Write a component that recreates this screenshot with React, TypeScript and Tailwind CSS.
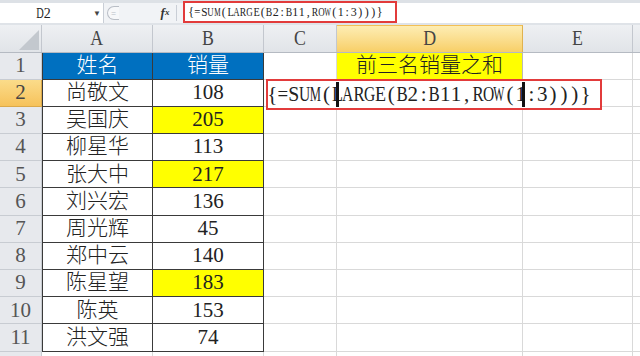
import React from 'react';

// column widths: row header, A, B, C, D, E (F takes the rest)
const COLS = [42, 111, 111, 73, 186, 110];
const LETTERS = ['A', 'B', 'C', 'D', 'E'];

type Row = { name: string; sales: string; hot?: boolean };

const ROWS: Row[] = [
  { name: '尚敬文', sales: '108' },
  { name: '吴国庆', sales: '205', hot: true },
  { name: '柳星华', sales: '113' },
  { name: '张大中', sales: '217', hot: true },
  { name: '刘兴宏', sales: '136' },
  { name: '周光辉', sales: '45' },
  { name: '郑中云', sales: '140' },
  { name: '陈星望', sales: '183', hot: true },
  { name: '陈英', sales: '153' },
  { name: '洪文强', sales: '74' },
];

const FORMULA = '{=SUM(LARGE(B2:B11,ROW(1:3)))}';

// squeeze wide Times glyphs into a half-em box (SimSun look)
const SQUEEZE: Record<string, string> = {
  M: 'scale-x-[0.6]',
  W: 'scale-x-[0.56]',
  U: 'scale-x-[0.74]',
  A: 'scale-x-[0.74]',
  G: 'scale-x-[0.74]',
  O: 'scale-x-[0.74]',
  D: 'scale-x-[0.74]',
  R: 'scale-x-[0.8]',
  B: 'scale-x-[0.8]',
  L: 'scale-x-[0.86]',
  E: 'scale-x-[0.86]',
  S: 'scale-x-[0.94]',
  '=': 'scale-x-[0.9]',
};

function MonoSerif({ text, cell }: { text: string; cell: string }) {
  return (
    <span className="inline-flex whitespace-pre">
      {text.split('').map((ch, i) => (
        <span key={i} className={'inline-flex justify-center ' + cell}>
          <span className={'inline-block ' + (SQUEEZE[ch] ?? '')}>{ch}</span>
        </span>
      ))}
    </span>
  );
}

function FormulaBar() {
  return (
    <div className="flex h-[23px] items-stretch bg-[#f1f3f6] border-t-[3px] border-[#dde1e6]">
      <div className="flex w-[104px] items-center bg-white border-r border-[#c9ced6]">
        <span className="flex-1 pr-[6px] text-center font-['Liberation_Serif',serif] text-[14px] text-[#222]">
          <MonoSerif text="D2" cell="w-[7.5px]" />
        </span>
        <span className="mr-[2px] text-[8px] text-[#444]">▼</span>
      </div>
      <div className="flex w-[50px] items-center pl-[3px]">
        <div className="flex h-[14px] w-[12px] items-center justify-center rounded-l-full border border-r-0 border-[#b9bec6] bg-[#f7f8fa] text-[9px] leading-none text-[#b9bec6]">=</div>
      </div>
      <div className="flex w-[22px] items-center justify-center font-['Liberation_Serif',serif] text-[13px] font-bold italic text-[#333]">
        f<span className="text-[9px]">x</span>
      </div>
      <div className="w-px bg-[#c9ced6] my-[2px]" />
      <div className="w-[6px]" />
      <div className="flex w-[214px] items-center border-2 border-[#e23b3b] bg-white pl-[3px] -mt-[2px] font-['Liberation_Serif',serif] text-[12px] text-[#222]">
        <MonoSerif text={FORMULA} cell="w-[6.5px]" />
      </div>
      <div className="flex-1 bg-white" />
    </div>
  );
}

function ColumnHeader() {
  return (
    <div className="flex h-[27.5px] bg-[#e4e7eb] border-b border-[#b5bac2]">
      <div className="relative w-[42px] shrink-0 border-r border-[#c3c7ce] bg-gradient-to-b from-[#eef0f3] to-[#e1e4e8]">
        <svg className="absolute right-[2px] bottom-[2px]" width="20" height="20" viewBox="0 0 20 20">
          <polygon points="20,0 20,20 0,20" fill="#c3c8ce" />
        </svg>
      </div>
      {LETTERS.map((l, i) => (
        <div
          key={l}
          style={{ width: COLS[i + 1] }}
          className={
            'flex shrink-0 items-center justify-center border-r font-["Liberation_Serif",serif] text-[21px] text-[#444] ' +
            (l === 'D'
              ? 'bg-gradient-to-b from-[#fdedb3] to-[#f8cf66] border-[#e0b24f] border-t border-t-[#f2bf55]'
              : 'bg-gradient-to-b from-[#eef0f3] to-[#e1e4e8] border-[#c3c7ce]')
          }
        >
          <span className="inline-block scale-x-[0.85]">{l}</span>
        </div>
      ))}
      <div className="flex-1 bg-gradient-to-b from-[#eef0f3] to-[#e1e4e8]" />
    </div>
  );
}

function RowHeader({ n, active }: { n?: number; active?: boolean }) {
  return (
    <div
      className={
        'flex w-[42px] shrink-0 items-center justify-center border-r border-b font-["Liberation_Serif",serif] text-[21px] ' +
        (active
          ? 'bg-gradient-to-b from-[#fbdc8a] to-[#f6c25a] border-[#dba94a] text-[#444]'
          : 'bg-[#e7e9ed] border-[#c8ccd2] text-[#555]')
      }
    >
      {n}
    </div>
  );
}

const cjk = "font-['Liberation_Serif','Noto_Sans_CJK_SC',serif] font-light";

export default function App() {
  return (
    <div className="relative h-[356px] w-[640px] overflow-hidden bg-white">
      <FormulaBar />
      <div className="h-[2px] bg-[#dfe3e8]" />
      <ColumnHeader />

      {/* row 1 */}
      <div className="flex h-[27.2px]">
        <RowHeader n={1} />
        <div className={`flex w-[111px] shrink-0 items-center justify-center border-x border-b border-[#3a3a3a] bg-[#0070c0] text-[21px] text-white ${cjk}`}>姓名</div>
        <div className={`flex w-[111px] shrink-0 items-center justify-center border-r border-b border-[#3a3a3a] bg-[#0070c0] text-[21px] text-white ${cjk}`}>销量</div>
        <div className="w-[73px] shrink-0 border-r border-b border-[#d9d9d9]" />
        <div className={`flex w-[186px] shrink-0 items-center justify-center border-r border-b border-[#b9b9b9] bg-[#ffff00] text-[21px] text-[#222] ${cjk}`}>前三名销量之和</div>
        <div className="w-[110px] shrink-0 border-r border-b border-[#d9d9d9]" />
        <div className="flex-1 border-b border-[#d9d9d9]" />
      </div>

      {ROWS.map((r, i) => (
        <div key={i} className="flex h-[27.2px]">
          <RowHeader n={i + 2} active={i === 0} />
          <div className={`flex w-[111px] shrink-0 items-center justify-center border-x border-b border-[#3a3a3a] text-[21px] text-[#222] ${cjk}`}>{r.name}</div>
          <div
            className={
              'flex w-[111px] shrink-0 items-center justify-center border-r border-b border-[#3a3a3a] font-["Liberation_Serif",serif] text-[21px] text-[#222] ' +
              (r.hot ? 'bg-[#ffff00]' : 'bg-white')
            }
          >
            {r.sales}
          </div>
          <div className="w-[73px] shrink-0 border-r border-b border-[#d9d9d9]" />
          <div className="w-[186px] shrink-0 border-r border-b border-[#d9d9d9]" />
          <div className="w-[110px] shrink-0 border-r border-b border-[#d9d9d9]" />
          <div className="flex-1 border-b border-[#d9d9d9]" />
        </div>
      ))}

      {/* row 12, cut off by the window edge */}
      <div className="flex h-[27.2px]">
        <RowHeader />
        <div className="w-[111px] shrink-0 border-r border-[#d9d9d9]" />
        <div className="w-[111px] shrink-0 border-r border-[#d9d9d9]" />
        <div className="w-[73px] shrink-0 border-r border-[#d9d9d9]" />
        <div className="w-[186px] shrink-0 border-r border-[#d9d9d9]" />
        <div className="w-[110px] shrink-0 border-r border-[#d9d9d9]" />
      </div>

      {/* in-cell editor for D2, spilling over C2 and E2 */}
      <div className="absolute left-[266px] top-[79px] flex h-[31px] w-[336px] items-center border-2 border-[#e23b3b] bg-white font-['Liberation_Serif',serif] text-[21px] text-[#222]">
        <span className="-ml-[1px]">
          <MonoSerif text={FORMULA} cell="w-[10.8px]" />
        </span>
      </div>
      {/* active cell edges peeking through the editor */}
      <div className="absolute left-[336px] top-[82px] h-[25px] w-[3px] bg-[#111]" />
      <div className="absolute left-[522px] top-[82px] h-[25px] w-[3px] bg-[#111]" />
    </div>
  );
}
